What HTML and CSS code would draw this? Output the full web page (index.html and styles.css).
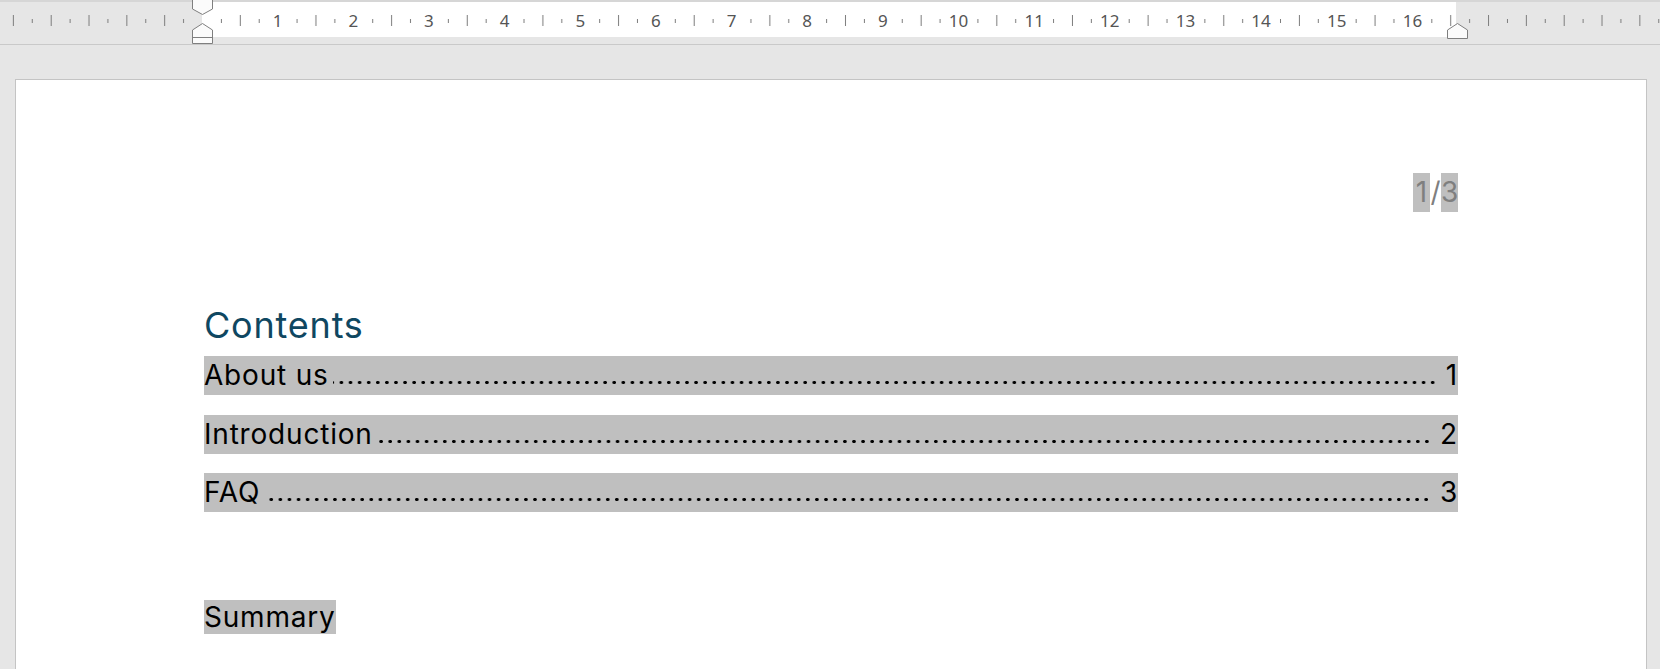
FILE: index.html
```html
<!DOCTYPE html>
<html lang="en">
<head>
<meta charset="utf-8">
<title>Document</title>
<link rel="stylesheet" href="styles.css">
</head>
<body>
<div class="ruler">
  <svg class="ruler-svg" width="1660" height="45" viewBox="0 0 1660 45">
    <defs>
      <pattern id="ticks-gray" x="202" y="0" width="75.65" height="45" patternUnits="userSpaceOnUse">
        <rect x="0" y="15" width="1" height="11" fill="#7c7c7c"/>
        <rect x="18.9" y="19" width="1" height="4" fill="#7c7c7c"/>
        <rect x="37.8" y="15" width="1" height="11" fill="#7c7c7c"/>
        <rect x="56.7" y="19" width="1" height="4" fill="#7c7c7c"/>
      </pattern>
      <pattern id="ticks-white" x="202" y="0" width="75.65" height="45" patternUnits="userSpaceOnUse">
        <rect x="18.9" y="19" width="1" height="4" fill="#7c7c7c"/>
        <rect x="37.8" y="15" width="1" height="11" fill="#7c7c7c"/>
        <rect x="56.7" y="19" width="1" height="4" fill="#7c7c7c"/>
      </pattern>
    </defs>
    <rect x="0" y="0" width="1660" height="45" fill="#e6e6e6"/>
    <rect x="0" y="0" width="1660" height="2" fill="#d6d6d6"/>
    <rect x="202" y="2" width="1254" height="35" fill="#ffffff"/>
    <rect x="0" y="0" width="202" height="44" fill="url(#ticks-gray)"/>
    <rect x="203" y="0" width="1253" height="44" fill="url(#ticks-white)"/>
    <rect x="1456" y="0" width="204" height="44" fill="url(#ticks-gray)"/>
    <rect x="0" y="44" width="1660" height="1" fill="#c9c9c9"/>
    <g class="ruler-nums">
      <text x="277.65" y="27">1</text>
      <text x="353.3" y="27">2</text>
      <text x="428.95" y="27">3</text>
      <text x="504.6" y="27">4</text>
      <text x="580.25" y="27">5</text>
      <text x="655.9" y="27">6</text>
      <text x="731.55" y="27">7</text>
      <text x="807.2" y="27">8</text>
      <text x="882.85" y="27">9</text>
      <text x="958.5" y="27">10</text>
      <text x="1034.15" y="27">11</text>
      <text x="1109.8" y="27">12</text>
      <text x="1185.45" y="27">13</text>
      <text x="1261.1" y="27">14</text>
      <text x="1336.75" y="27">15</text>
      <text x="1412.4" y="27">16</text>
    </g>
    <g class="marker">
      <path d="M192.5,-1 V9 L202.5,14.5 L212.5,9 V-1 Z"/>
      <path d="M202.5,23.5 L212.5,30 V43.5 H192.5 V30 Z"/>
      <path class="marker-line" d="M192.5,37.5 H212.5"/>
      <path d="M1457.5,23.5 L1467.5,30 V38.5 H1447.5 V30 Z"/>
    </g>
  </svg>
</div>
<div class="workspace">
  <div class="page">
    <div class="page-header"><span class="hl pg">1</span><span class="slash">/</span><span class="hl pg">3</span></div>
    <h1 class="heading">Contents</h1>
    <div class="toc">
      <div class="toc-row"><span class="label">About us</span><span class="leader"></span><span class="num">1</span></div>
      <div class="toc-row"><span class="label">Introduction</span><span class="leader"></span><span class="num">2</span></div>
      <div class="toc-row"><span class="label">FAQ</span><span class="leader"></span><span class="num">3</span></div>
    </div>
    <p class="summary"><span class="hl">Summary</span></p>
  </div>
</div>
</body>
</html>
```

FILE: styles.css
```css
html, body {
  margin: 0;
  padding: 0;
  height: 669px;
  overflow: hidden;
  background: #e6e6e6;
}

.ruler {
  height: 45px;
}

.ruler-svg {
  display: block;
}

.ruler-nums text {
  font-family: "Noto Sans", "Open Sans", sans-serif;
  font-size: 17px;
  fill: #555555;
  text-anchor: middle;
}

.marker path {
  fill: #fbfbfb;
  stroke: #7f7f7f;
  stroke-width: 1;
}

.marker .marker-line {
  fill: none;
}

.workspace {
  padding-top: 34px;
  padding-left: 15px;
}

.page {
  width: 1254px;
  height: 497px;
  padding: 93px 188px 0 188px;
  background: #ffffff;
  border: 1px solid #c4c4c4;
  border-bottom: none;
  font-family: Inter, "Liberation Sans", sans-serif;
  color: #000000;
}

.hl {
  background: #bfbfbf;
}

.page-header {
  display: flex;
  justify-content: flex-end;
  font-size: 28px;
  line-height: 39px;
  color: #7f7f7f;
}

.pg {
  display: inline-block;
  width: 17px;
  text-align: center;
}

.slash {
  display: inline-block;
  width: 11px;
  text-align: center;
}

.heading {
  margin: 92px 0 0 0;
  font-size: 36px;
  line-height: 42px;
  letter-spacing: 0.8px;
  font-weight: 400;
  color: #0f4761;
}

.toc {
  margin-top: 10px;
  display: flex;
  flex-direction: column;
  gap: 19.5px;
}

.toc-row {
  display: flex;
  height: 39px;
  background: #bfbfbf;
  font-size: 28px;
  line-height: 39px;
  letter-spacing: 0.8px;
}

.label {
  flex: none;
  white-space: nowrap;
}

.leader {
  flex: 1;
  min-width: 0;
  margin-left: 4px;
  background-image: radial-gradient(circle 2.2px at 4.55px 26.5px, #000000 0, #000000 1.4px, rgba(0, 0, 0, 0) 2px);
  background-size: 9.1px 39px;
  background-repeat: repeat-x;
  background-position: right top;
}

.num {
  flex: none;
  margin-left: 9px;
}

.summary {
  margin: 86px 0 0 0;
  font-size: 28px;
  line-height: 39px;
  letter-spacing: 0.8px;
}
```
